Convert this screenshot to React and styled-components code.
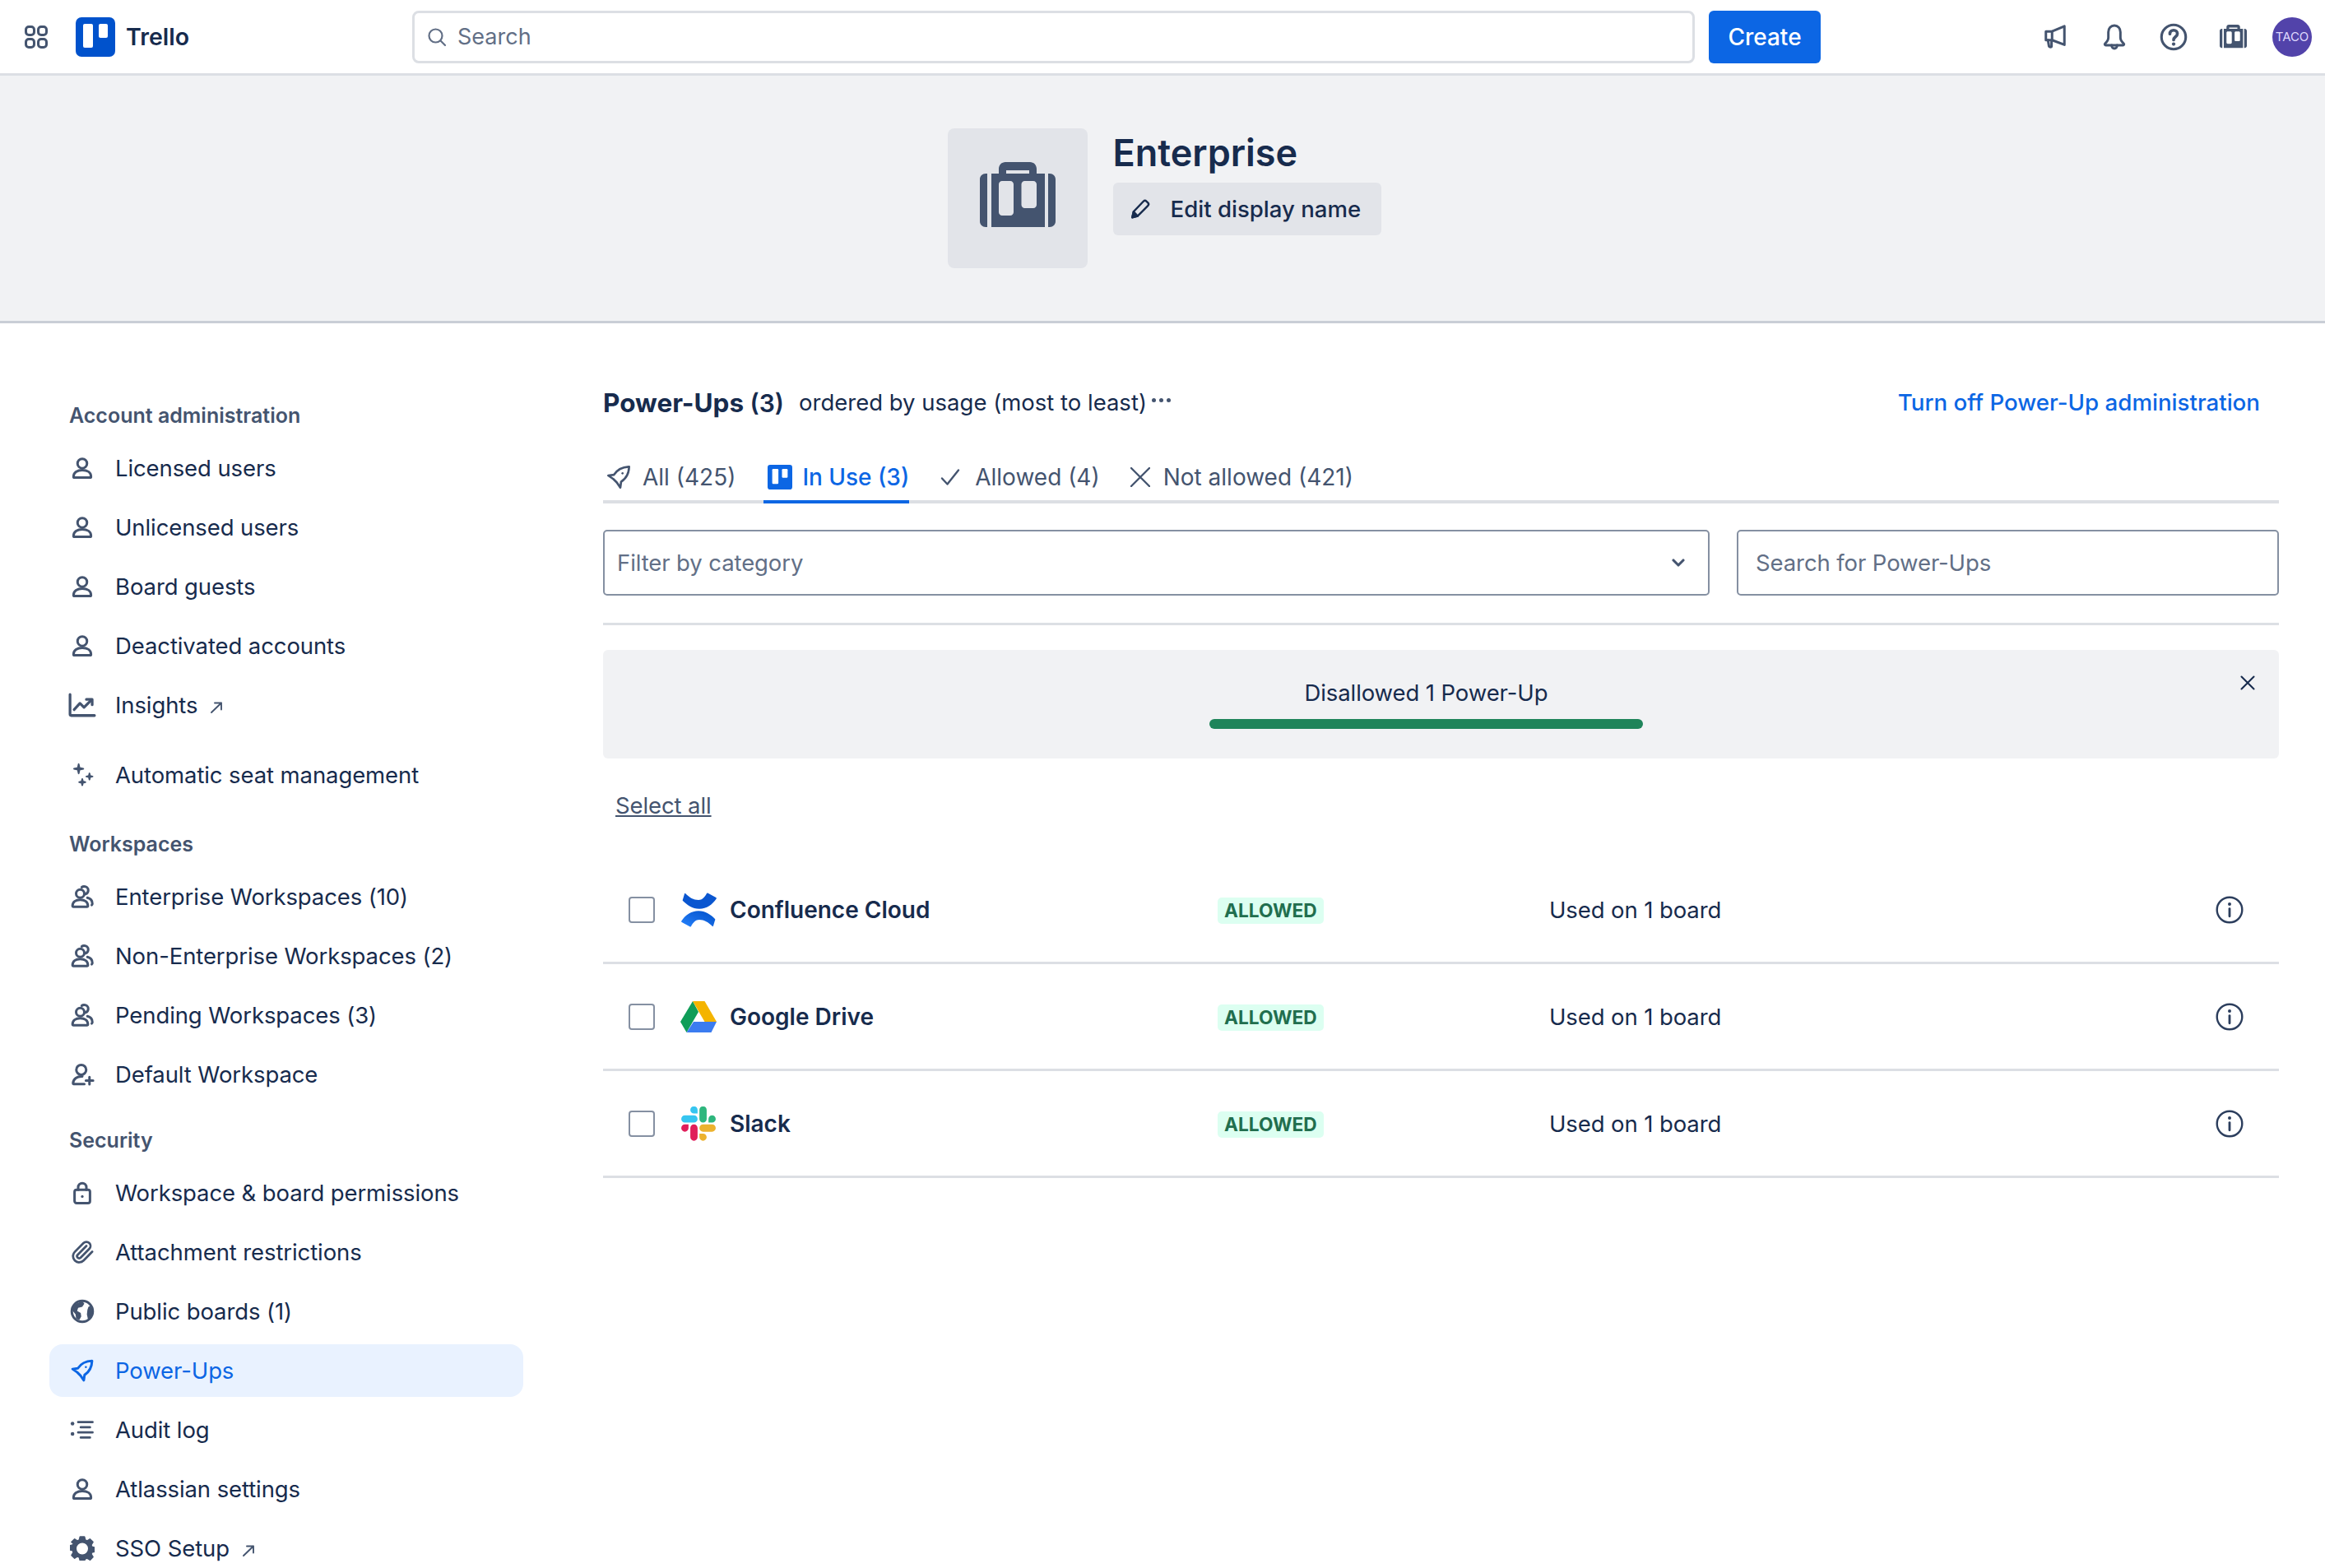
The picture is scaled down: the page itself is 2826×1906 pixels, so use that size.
import React from 'react'
import styled, {createGlobalStyle} from 'styled-components'
import {Paperclip} from 'lucide-react'

const GlobalStyle = createGlobalStyle`
  html, body {
    margin: 0;
    padding: 0;
    width: 2826px;
    height: 1906px;
    overflow: hidden;
    background: #fff;
  }
  * {
    box-sizing: border-box;
  }
  body {
    font-family: Inter, "Noto Sans", sans-serif;
    font-size: 27.5px;
    letter-spacing: -0.1px;
    color: #172b4d;
  }
`

const Glyph = styled.svg`
  display: block;
  flex-shrink: 0;
  fill: none;
  stroke: currentColor;
  stroke-width: ${(p) => p.$stroke || 1.6}px;
  stroke-linecap: round;
  stroke-linejoin: round;
`

const Icon = ({size = 30, box = 24, stroke = 2.4, children, ...rest}) => (
  <Glyph
    width={size}
    height={size}
    viewBox={`0 0 ${box} ${box}`}
    $stroke={stroke}
    {...rest}
  >
    {children}
  </Glyph>
)

const Person = (p) => (
  <Icon {...p}>
    <circle cx="12" cy="7.5" r="4.6" />
    <path d="M3.5 20.3c0-4 3.6-6.3 8.5-6.3s8.5 2.3 8.5 6.3c0 .5-.4.9-.9.9H4.400c-.5 0-.9-.4-.9-.9z" />
  </Icon>
)

const People = (p) => (
  <Icon {...p}>
    <circle cx="10" cy="9" r="4" />
    <path d="M2.500 21c0-3.700 3-6 7.500-6s7.500 2.300 7.500 6c0 .4-.3.7-.7.7H3.200c-.4 0-.7-.3-.7-.7z" />
    <path d="M11.500 2.800c.6-.5 1.400-.8 2.300-.8 2.300 0 4 1.700 4 3.800 0 1.800-1.100 3.200-2.700 3.700M17 13c3 .7 4.800 2.800 4.800 5.800 0 .6-.2 1-.6 1.300" />
  </Icon>
)

const PersonPlus = (p) => (
  <Icon {...p}>
    <circle cx="11" cy="7.500" r="4.800" />
    <path d="M12 14c-5-.3-8.800 2.200-9 6.800 0 .3.200.5.500.5H14" />
    <path d="M19 14.500v7M15.500 18h7" />
  </Icon>
)

const Chart = () => (
  <Icon size={34} stroke={2.300}>
    <path d="M1.500 3v17c0 .6.400 1 1 1h20" />
    <path d="M5 16l5-5.500 3.500 3.500 6.500-6.500" />
    <path d="M15.500 7.200h5v4.600" />
  </Icon>
)

const Sparkles = (p) => (
  <Icon {...p} stroke={0}>
    <g fill="currentColor">
      <path d="M8.500 1.500l.8 3.700 3.700.8-3.700.8-.8 3.700-.8-3.700L4 6l3.700-.8z" />
      <path d="M19 10.500l.6 2.400 2.400.6-2.400.6-.6 2.400-.6-2.400-2.400-.6 2.400-.6z" />
      <path d="M12 16l.6 2.400 2.400.6-2.400.6-.6 2.400-.6-2.400-2.400-.6 2.400-.6z" />
    </g>
  </Icon>
)

const Lock = (p) => (
  <Icon {...p}>
    <rect x="4.500" y="9" width="15" height="13" rx="2" />
    <path d="M8 9V6.500a4 4 0 018 0V9" />
    <circle cx="12" cy="15.500" r="1.300" fill="currentColor" stroke="none" />
  </Icon>
)

const Clip = ({size = 30}) => (
  <Paperclip size={size} strokeWidth={2.200} />
)

const Globe = (p) => (
  <Icon {...p}>
    <circle cx="12" cy="12" r="10.200" />
    <path
      fill="currentColor"
      stroke="none"
      d="M5 5l7-3 2 2.500-2 3-4 1-1 3 3.500 2 .5 3.500-2 3.500L6 19l-.5-4L2 10.500zM20 6.500L22 12l-1.500 5.500-3 2-1-4.500.5-4.500 1-3z"
    />
  </Icon>
)

const Rocket = (p) => (
  <Icon {...p}>
    <path d="M21.500 2.500c-6.500.2-11 3-13.800 7.300L2.500 10.500l4.600 3.200 3.200 3.200 3.200 4.600.700-5.200c4.300-2.800 7.100-7.300 7.300-13.800z" />
    <circle cx="15.500" cy="8.500" r="1" fill="currentColor" stroke="none" />
  </Icon>
)

const ListLines = (p) => (
  <Icon {...p} stroke={2.200}>
    <path d="M8 4.500h14M10.500 9.500h9M8 14.500h14M10.500 19.500h9" />
    <circle cx="2.500" cy="6" r="1.800" fill="currentColor" stroke="none" />
    <circle cx="2.500" cy="16" r="1.800" fill="currentColor" stroke="none" />
  </Icon>
)

const Cog = (p) => (
  <Icon {...p} stroke={0}>
    <path
      fill="currentColor"
      fillRule="evenodd"
      d="M10 1h4l.8 3.200 1.900.8L19.500 3.300 22.200 6l-1.700 2.800.8 1.900 3 .8v3.500l-3 .8-.8 1.900 1.700 2.800-2.700 2.700-2.800-1.700-1.900.8L14 23.800h-4l-.8-3.200-1.900-.8-2.800 1.700L1.800 18.800l1.700-2.800-.8-1.900-3-.8v-3.500l3-.8.8-1.900L1.800 6l2.700-2.700L7.300 5l1.900-.8zM12 6a6.400 6.400 0 100 12.800A6.400 6.400 0 0012 6z"
    />
  </Icon>
)

const OutArrow = () => (
  <Icon size={16} box={16} stroke={1.900}>
    <path d="M2 14L14 2.500M6 2.500h8v8" />
  </Icon>
)

const Grid4 = () => (
  <Icon size={28} box={28} stroke={3}>
    <rect x="1.500" y="1.500" width="10" height="10" rx="3.500" />
    <rect x="16.500" y="1.500" width="10" height="10" rx="3.500" />
    <rect x="1.500" y="16.500" width="10" height="10" rx="3.500" />
    <rect x="16.500" y="16.500" width="10" height="10" rx="3.500" />
  </Icon>
)

const Briefcase = ({width = 92}) => (
  <svg width={width} height={(width * 80) / 92} viewBox="0 0 92 80">
    <path
      fill="#44546f"
      fillRule="evenodd"
      d="M14 14h9V8c0-4.400 3.600-8 8-8h30c4.400 0 8 3.600 8 8v6h10v65H14zM32 14h28V10H32zM27 23c-2.200 0-4 1.800-4 4v34c0 2.200 1.800 4 4 4h10c2.200 0 4-1.800 4-4V27c0-2.200-1.800-4-4-4zM54.500 23c-2.200 0-4 1.800-4 4v25c0 2.200 1.800 4 4 4H65c2.200 0 4-1.800 4-4V27c0-2.200-1.800-4-4-4zM9 14v65H7c-3.900 0-7-3.100-7-7V21c0-3.900 3.100-7 7-7zM83 14h2c3.900 0 7 3.100 7 7v51c0 3.900-3.100 7-7 7h-2z"
    />
  </svg>
)

const TrelloMark = ({size = 48, rx = 7, bg = '#0052cc', fg = '#fff'}) => (
  <svg width={size} height={size} viewBox="0 0 48 48">
    <rect width="48" height="48" rx={rx} fill={bg} />
    <rect x="9" y="8" width="12" height="29" rx="2" fill={fg} />
    <rect x="28" y="8" width="11" height="17" rx="2" fill={fg} />
  </svg>
)

const confluenceBand =
  'M5 1c5 5 10 8 16 8 4.500 0 7.500-3.500 10-8 .3-.6.700-.7 1.200-.4L42.300 6c.6.300.7 1 .4 1.500C38 14.500 31 19.700 22 19.700 13.500 19.700 7 15 2 10c-.5-.6-.5-1.200 0-1.800L4 1.500c.2-.7.700-.8 1-.5z'

const ConfluenceLogo = () => (
  <svg width="43" height="42" viewBox="0 0 43 42">
    <defs>
      <linearGradient id="confBottom" x1="0" y1="1" x2="1" y2="0">
        <stop offset="0" stopColor="#0052cc" />
        <stop offset="0.5" stopColor="#1467e0" />
        <stop offset="1" stopColor="#2684ff" />
      </linearGradient>
    </defs>
    <path fill="#0a56d0" d={confluenceBand} />
    <path fill="url(#confBottom)" d={confluenceBand} transform="rotate(180 21.5 21)" />
  </svg>
)

const DriveLogo = () => (
  <svg width="44" height="38" viewBox="0 0 44 38">
    <path fill="#0f9d58" d="M15 0L0 25l7.500 13L22 13z" />
    <path fill="#f4b400" d="M15 0h14.500L44 25H29.500z" />
    <path fill="#3b7cf0" d="M16 25h28l-6.500 13H7.500z" />
  </svg>
)

const SlackLogo = () => (
  <svg width="42" height="42" viewBox="0 0 125 125">
    <path
      fill="#e01e5a"
      d="M26.400 78.200c0 7.200-5.900 13.100-13.100 13.100S.2 85.400.2 78.200s5.900-13.100 13.100-13.100h13.100v13.100zm6.600 0c0-7.200 5.900-13.100 13.100-13.100s13.100 5.900 13.100 13.100V111c0 7.200-5.900 13.100-13.100 13.100S33 118.200 33 111V78.200z"
    />
    <path
      fill="#36c5f0"
      d="M46.100 25.600C38.900 25.600 33 19.700 33 12.500S38.900-.6 46.100-.6s13.100 5.900 13.100 13.100v13.100H46.100zm0 6.600c7.200 0 13.100 5.900 13.100 13.100s-5.900 13.100-13.100 13.100H13.300C6.100 58.400.2 52.500.2 45.300s5.900-13.100 13.100-13.100h32.800z"
    />
    <path
      fill="#2eb67d"
      d="M98.700 45.300c0-7.200 5.900-13.100 13.100-13.100s13.100 5.900 13.100 13.100-5.900 13.100-13.100 13.100H98.700V45.300zm-6.600 0c0 7.200-5.900 13.100-13.100 13.100s-13.100-5.900-13.100-13.100V12.500C65.900 5.300 71.800-.6 79-.6s13.100 5.900 13.100 13.100v32.800z"
    />
    <path
      fill="#ecb22e"
      d="M79 97.900c7.200 0 13.100 5.900 13.100 13.100s-5.900 13.100-13.100 13.100-13.100-5.900-13.100-13.100V97.900H79zm0-6.600c-7.200 0-13.100-5.900-13.100-13.100s5.900-13.100 13.100-13.100h32.800c7.200 0 13.100 5.900 13.100 13.100s-5.900 13.100-13.100 13.100H79z"
    />
  </svg>
)

const sections = [
  {
    title: 'Account administration',
    items: [
      {label: 'Licensed users', icon: Person},
      {label: 'Unlicensed users', icon: Person},
      {label: 'Board guests', icon: Person},
      {label: 'Deactivated accounts', icon: Person},
      {label: 'Insights', icon: Chart, external: true},
      {label: 'Automatic seat management', icon: Sparkles, spaced: true},
    ],
  },
  {
    title: 'Workspaces',
    gap: 36,
    items: [
      {label: 'Enterprise Workspaces (10)', icon: People},
      {label: 'Non-Enterprise Workspaces (2)', icon: People},
      {label: 'Pending Workspaces (3)', icon: People},
      {label: 'Default Workspace', icon: PersonPlus},
    ],
  },
  {
    title: 'Security',
    gap: 32,
    items: [
      {label: 'Workspace & board permissions', icon: Lock},
      {label: 'Attachment restrictions', icon: Clip},
      {label: 'Public boards (1)', icon: Globe},
      {label: 'Power-Ups', icon: Rocket, active: true},
      {label: 'Audit log', icon: ListLines},
      {label: 'Atlassian settings', icon: Person},
      {label: 'SSO Setup', icon: Cog, external: true},
    ],
  },
]

const powerUps = [
  {name: 'Confluence Cloud', logo: ConfluenceLogo},
  {name: 'Google Drive', logo: DriveLogo},
  {name: 'Slack', logo: SlackLogo},
]

export default function App() {
  return (
    <Page>
      <GlobalStyle />
      <TopBar>
        <Brand>
          <SwitcherSlot>
            <Grid4 />
          </SwitcherSlot>
          <TrelloMark />
          <BrandName>Trello</BrandName>
        </Brand>
        <SearchBox>
          <Icon size={24} stroke={2.200}>
            <circle cx="10.500" cy="10.500" r="8" />
            <path d="M16.500 16.500l5.500 5.500" />
          </Icon>
          <span>Search</span>
        </SearchBox>
        <CreateButton>Create</CreateButton>
        <Tools>
          <ToolSlot>
            <Icon size={30} stroke={2.400}>
              <path d="M3 6.500h6L21 1.500v18L9 15H3z" />
              <path d="M9 6.500V15M5 15l1 6c.2 1 2.500 1 2.500 0V15.500" />
            </Icon>
          </ToolSlot>
          <ToolSlot>
            <Icon size={32} stroke={2.200}>
              <path d="M12 1.500c-3.200 0-5.500 2.500-5.500 6v5c0 2.500-1.500 4-3 5.500-.6.6-.2 1.500.6 1.500h15.800c.8 0 1.200-.9.6-1.500-1.500-1.500-3-3-3-5.500v-5c0-3.500-2.300-6-5.500-6z" />
              <path d="M9.500 19.500c0 1.700 1 3 2.500 3s2.500-1.300 2.500-3" />
            </Icon>
          </ToolSlot>
          <ToolSlot>
            <Icon size={34} stroke={2.200}>
              <circle cx="12" cy="12" r="10.400" />
              <path d="M8.800 9.300c0-1.900 1.400-3.100 3.200-3.100s3.200 1.200 3.200 2.900c0 2.700-3.200 2.700-3.200 5.300" strokeWidth="2.600" />
              <circle cx="12" cy="18" r="1.500" fill="currentColor" stroke="none" />
            </Icon>
          </ToolSlot>
          <ToolSlot>
            <Briefcase width={33} />
          </ToolSlot>
          <ToolSlot>
            <Avatar>TACO</Avatar>
          </ToolSlot>
        </Tools>
      </TopBar>

      <Hero>
        <HeroTile>
          <Briefcase />
        </HeroTile>
        <HeroText>
          <HeroTitle>Enterprise</HeroTitle>
          <EditButton>
            <Icon size={26} stroke={2.200}>
              <path d="M15.500 3.500c1-1 2.500-1 3.500 0l1.500 1.500c1 1 1 2.500 0 3.500L9 20l-6 1.500L4.500 15z" />
              <path d="M3 21.500L4.500 15 9 20z" fill="currentColor" />
            </Icon>
            <span>Edit display name</span>
          </EditButton>
        </HeroText>
      </Hero>

      <Body>
        <Sidebar>
          {sections.map((section) => (
            <section key={section.title}>
              <SectionTitle $gap={section.gap}>{section.title}</SectionTitle>
              <NavList>
                {section.items.map(({label, icon: NavIcon, external, spaced, active}) => (
                  <NavItem key={label} $active={active} $spaced={spaced}>
                    <NavIconSlot $active={active}>
                      <NavIcon size={30} />
                    </NavIconSlot>
                    <span>{label}</span>
                    {external && (
                      <ExternalSlot>
                        <OutArrow />
                      </ExternalSlot>
                    )}
                  </NavItem>
                ))}
              </NavList>
            </section>
          ))}
        </Sidebar>

        <Main>
          <TitleRow>
            <Title>
              Power-Ups <TitleCount>(3)</TitleCount>
            </Title>
            <SortLabel>ordered by usage (most to least)</SortLabel>
            <Dots>
              <i />
              <i />
              <i />
            </Dots>
            <AdminLink>Turn off Power-Up administration</AdminLink>
          </TitleRow>

          <Tabs>
            <Tab $gap={13} $inset={3}>
              <Rocket size={32} stroke={2} />
              <span>All (425)</span>
            </Tab>
            <Tab $gap={12} $inset={5} $active>
              <TrelloMark size={30} rx={5} bg="#0c66e4" />
              <span>In Use (3)</span>
            </Tab>
            <Tab $gap={18} $inset={4}>
              <Icon size={24} stroke={2.400}>
                <path d="M2 13.500l6.500 7L22 3.500" />
              </Icon>
              <span>Allowed (4)</span>
            </Tab>
            <Tab $gap={16} $inset={3}>
              <Icon size={24} stroke={2.400}>
                <path d="M1 1l22 22M23 1L1 23" />
              </Icon>
              <span>Not allowed (421)</span>
            </Tab>
          </Tabs>

          <Filters>
            <CategoryField>
              <span>Filter by category</span>
              <Icon size={18} stroke={4.200}>
                <path d="M4 8l8 8 8-8" />
              </Icon>
            </CategoryField>
            <PowerUpSearch>Search for Power-Ups</PowerUpSearch>
          </Filters>

          <Separator />

          <Banner>
            <BannerText>Disallowed 1 Power-Up</BannerText>
            <Progress />
            <BannerClose>
              <Icon size={18} stroke={2.800}>
                <path d="M2 2l20 20M22 2L2 22" />
              </Icon>
            </BannerClose>
          </Banner>

          <SelectAll>Select all</SelectAll>

          <Rows>
            {powerUps.map(({name, logo: Logo}) => (
              <Row key={name}>
                <Checkbox />
                <LogoSlot>
                  <Logo />
                </LogoSlot>
                <PowerUpName>{name}</PowerUpName>
                <BadgeCell>
                  <Badge>Allowed</Badge>
                </BadgeCell>
                <Usage>Used on 1 board</Usage>
                <InfoSlot>
                  <Icon size={34} stroke={1.700}>
                    <circle cx="12" cy="12" r="10.800" />
                    <path d="M12 11v6.500" strokeWidth="2" />
                    <circle cx="12" cy="7" r="1.400" fill="currentColor" stroke="none" />
                  </Icon>
                </InfoSlot>
              </Row>
            ))}
          </Rows>
        </Main>
      </Body>
    </Page>
  )
}

const Page = styled.div`
  width: 2826px;
  height: 1906px;
  overflow: hidden;
`

const TopBar = styled.header`
  display: flex;
  align-items: center;
  height: 92px;
  padding: 0 4px 0 30px;
  background: #fff;
  border-bottom: 3px solid #dcdfe4;
`

const Brand = styled.div`
  display: flex;
  align-items: center;
  width: 471px;
  flex-shrink: 0;
`

const SwitcherSlot = styled.div`
  color: #44546f;
  margin-right: 34px;
`

const BrandName = styled.div`
  margin-left: 13px;
  font-size: 28.5px;
  font-weight: 600;
  letter-spacing: 0;
  color: #172b4d;
`

const SearchBox = styled.div`
  display: flex;
  align-items: center;
  gap: 13px;
  width: 1559px;
  height: 64px;
  padding-left: 15px;
  border: 3px solid #dcdfe4;
  border-radius: 8px;
  color: #626f86;
  font-size: 27px;
  letter-spacing: 0;
`

const CreateButton = styled.button`
  width: 136px;
  height: 64px;
  margin-left: 17px;
  border: 0;
  border-radius: 6px;
  background: #0c66e4;
  color: #fff;
  font-family: inherit;
  font-size: 28px;
  font-weight: 500;
`

const Tools = styled.div`
  display: flex;
  margin-left: auto;
  color: #44546f;
`

const ToolSlot = styled.div`
  display: flex;
  align-items: center;
  justify-content: center;
  width: 72px;
  height: 48px;
`

const Avatar = styled.div`
  display: flex;
  align-items: center;
  justify-content: center;
  width: 48px;
  height: 48px;
  border-radius: 50%;
  background: #5243aa;
  color: #dfd8fd;
  font-size: 15px;
`

const Hero = styled.div`
  display: flex;
  justify-content: center;
  gap: 31px;
  height: 301px;
  padding: 64px 0 0 4px;
  background: #f1f2f4;
  border-bottom: 3px solid #c9ced6;
`

const HeroTile = styled.div`
  display: flex;
  align-items: center;
  justify-content: center;
  width: 170px;
  height: 170px;
  padding-bottom: 8px;
  border-radius: 8px;
  background: #e2e4e9;
`

const HeroText = styled.div`
  display: flex;
  flex-direction: column;
  align-items: flex-start;
`

const HeroTitle = styled.h1`
  margin: 0;
  height: 66px;
  line-height: 60px;
  font-size: 45px;
  font-weight: 600;
  letter-spacing: 0;
  color: #172b4d;
`

const EditButton = styled.button`
  display: flex;
  align-items: center;
  gap: 24px;
  width: 326px;
  height: 64px;
  padding: 0 0 0 20px;
  border: 0;
  border-radius: 6px;
  background: #e2e4e9;
  color: #172b4d;
  font-family: inherit;
  font-size: 27.6px;
  font-weight: 500;
  letter-spacing: 0;
`

const Body = styled.div`
  display: flex;
  gap: 97px;
  padding-right: 56px;
`

const Sidebar = styled.nav`
  width: 636px;
  flex-shrink: 0;
  padding: 96px 0 0 60px;
`

const SectionTitle = styled.h2`
  height: 32px;
  line-height: 32px;
  margin: ${(p) => p.$gap || 0}px 0 16px;
  padding-left: 24px;
  font-size: 25px;
  font-weight: 600;
  letter-spacing: 0;
  color: #44546f;
`

const NavList = styled.div`
  display: flex;
  flex-direction: column;
  gap: 8px;
`

const NavItem = styled.div`
  display: flex;
  align-items: center;
  gap: 24px;
  height: 64px;
  padding-left: 24px;
  margin-top: ${(p) => (p.$spaced ? 13 : 0)}px;
  border-radius: 16px;
  background: ${(p) => (p.$active ? '#e9f2ff' : 'transparent')};
  color: ${(p) => (p.$active ? '#0c66e4' : '#172b4d')};
`

const NavIconSlot = styled.div`
  display: flex;
  align-items: center;
  justify-content: center;
  width: 32px;
  color: ${(p) => (p.$active ? '#0c66e4' : '#44546f')};
`

const ExternalSlot = styled.div`
  color: #44546f;
  margin: 6px 0 0 -9px;
`

const Main = styled.main`
  flex: 1;
  min-width: 0;
  padding-top: 76px;
`

const TitleRow = styled.div`
  display: flex;
  align-items: center;
  height: 40px;
`

const Title = styled.div`
  font-size: 31.5px;
  font-weight: 700;
  letter-spacing: 0;
  color: #172b4d;
`

const TitleCount = styled.span`
  font-size: 30px;
  font-weight: 600;
`

const SortLabel = styled.div`
  margin-left: 18px;
  letter-spacing: 0;
  color: #172b4d;
`

const Dots = styled.div`
  display: flex;
  gap: 4px;
  margin: -6px 0 0 6px;
  i {
    width: 5px;
    height: 5px;
    border-radius: 50%;
    background: #44546f;
  }
`

const AdminLink = styled.a`
  margin: 0 23px 0 auto;
  font-size: 27.7px;
  font-weight: 500;
  letter-spacing: 0;
  color: #0c66e4;
`

const Tabs = styled.div`
  display: flex;
  gap: 34px;
  height: 60px;
  margin-top: 43px;
  border-bottom: 4px solid #dcdfe4;
`

const Tab = styled.div`
  display: flex;
  align-items: center;
  gap: ${(p) => p.$gap}px;
  height: 60px;
  padding-left: ${(p) => p.$inset}px;
  border-bottom: 4px solid ${(p) => (p.$active ? '#0c66e4' : 'transparent')};
  color: ${(p) => (p.$active ? '#0c66e4' : '#44546f')};
  font-size: 28px;
  letter-spacing: 0;
  font-weight: ${(p) => (p.$active ? 500 : 400)};
`

const Filters = styled.div`
  display: flex;
  gap: 33px;
  margin-top: 32px;
`

const CategoryField = styled.div`
  display: flex;
  align-items: center;
  justify-content: space-between;
  width: 1345px;
  height: 80px;
  padding: 0 27px 0 15px;
  border: 2.5px solid #8590a2;
  border-radius: 5px;
  color: #626f86;
  svg {
    color: #44546f;
  }
`

const PowerUpSearch = styled.div`
  display: flex;
  align-items: center;
  flex: 1;
  height: 80px;
  padding-left: 21px;
  border: 2.5px solid #8590a2;
  border-radius: 5px;
  color: #626f86;
`

const Separator = styled.div`
  height: 3px;
  margin-top: 33px;
  background: #dcdfe4;
`

const Banner = styled.div`
  position: relative;
  display: flex;
  flex-direction: column;
  align-items: center;
  height: 132px;
  margin-top: 30px;
  padding: 32px 36px 0 0;
  border-radius: 6px;
  background: #f1f2f4;
`

const BannerText = styled.div`
  height: 40px;
  line-height: 40px;
  color: #172b4d;
`

const Progress = styled.div`
  width: 527px;
  height: 12px;
  margin-top: 12px;
  border-radius: 6px;
  background: #1f845a;
`

const BannerClose = styled.div`
  position: absolute;
  top: 31px;
  right: 29px;
  color: #172b4d;
`

const SelectAll = styled.a`
  display: block;
  height: 36px;
  line-height: 36px;
  margin: 39px 0 0 15px;
  color: #44546f;
  text-decoration: underline;
`

const Rows = styled.div`
  margin-top: 45px;
`

const Row = styled.div`
  display: flex;
  align-items: center;
  height: 130px;
  padding-left: 31px;
  border-bottom: 3px solid #dcdfe4;
`

const Checkbox = styled.div`
  width: 32px;
  height: 32px;
  border: 2.5px solid #8590a2;
  border-radius: 4px;
  flex-shrink: 0;
`

const LogoSlot = styled.div`
  display: flex;
  align-items: center;
  justify-content: center;
  width: 44px;
  margin: 0 16px 0 31px;
  flex-shrink: 0;
`

const PowerUpName = styled.div`
  width: 593px;
  font-size: 28px;
  font-weight: 600;
  letter-spacing: 0;
  color: #172b4d;
`

const BadgeCell = styled.div`
  width: 403px;
`

const Badge = styled.span`
  display: inline-flex;
  align-items: center;
  height: 32px;
  margin-top: 2px;
  padding: 0 8px;
  border-radius: 5px;
  background: #dcfff1;
  color: #216e4e;
  font-size: 22.7px;
  font-weight: 700;
  letter-spacing: 0;
  text-transform: uppercase;
`

const Usage = styled.div`
  flex: 1;
  color: #172b4d;
`

const InfoSlot = styled.div`
  margin-right: 43px;
  color: #2c3e5d;
`
